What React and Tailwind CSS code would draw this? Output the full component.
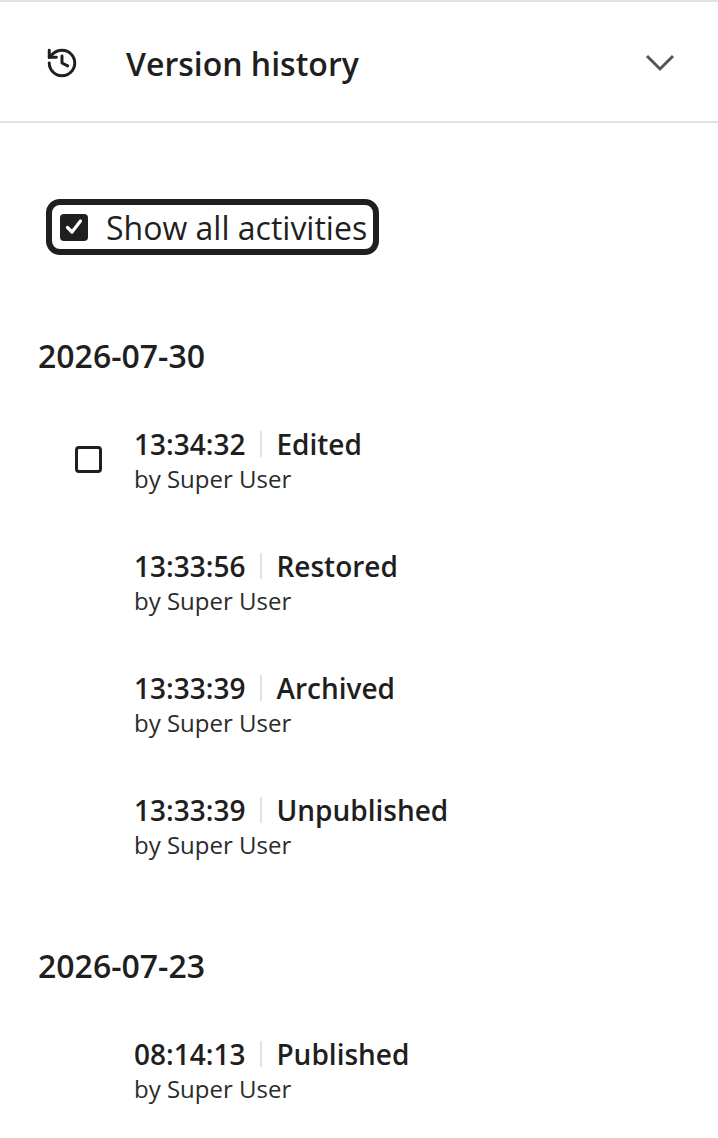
import { History } from "lucide-react";

function Row({ time, action, children }) {
  return (
    <div className="flex h-[122px] items-start">
      <div className="w-[96px] shrink-0 pl-[37px] pt-[18px]">{children}</div>
      <div>
        <div className="flex h-[32px] items-center text-[28px] font-semibold leading-[32px] text-[#1f1f1f]">
          <span>{time}</span>
          <span className="ml-[15px] mr-[14px] h-[26px] w-[2px] bg-[#e0e3e3]" />
          <span>{action}</span>
        </div>
        <div className="mt-[3px] text-[24px] leading-[32px] text-[#2b2b2b]">by Super User</div>
      </div>
    </div>
  );
}

function Group({ date, items, first }) {
  return (
    <section>
      <h3 className="pl-[38px] text-[32px] font-semibold leading-[40px] text-[#1f1f1f]">{date}</h3>
      <div className="mt-[52px] pl-[38px]">
        {items.map((item, i) => (
          <Row key={item.time + item.action} time={item.time} action={item.action}>
            {first && i === 0 ? <div className="h-[27px] w-[27px] rounded-[4px] border-[3px] border-[#1f1f1f]" /> : null}
          </Row>
        ))}
      </div>
    </section>
  );
}

export default function App() {
  return (
    <div className="min-h-[1138px] bg-white font-['Open_Sans',sans-serif]">
      <header className="flex h-[123px] items-center border-y-2 border-[#dfe3e3] pl-[45px] pr-[42px]">
        <History className="mt-[2px] h-[34px] w-[34px] text-[#1f1f1f]" strokeWidth={2.1} />
        <h2 className="ml-[47px] flex-1 pt-[4px] text-[32px] font-semibold text-[#1f1f1f]">Version history</h2>
        <svg width="32" height="20" viewBox="0 0 32 20" fill="none" className="text-[#555555]">
          <path d="M3 4 L16 17 L29 4" stroke="currentColor" strokeWidth="3" />
        </svg>
      </header>
      <div className="pl-[46px] pt-[76px]">
        <label className="inline-flex h-[56px] items-center gap-[18px] rounded-[14px] border-[6px] border-[#1f1f1f] pl-[8px] pr-[6px]">
          <span className="grid h-[27px] w-[28px] place-items-center rounded-[4px] bg-[#1f1f1f]">
            <svg width="20" height="20" viewBox="0 0 20 20" fill="none">
              <path d="M3.5 10.5 L8 15 L16.5 4" stroke="white" strokeWidth="3.2" strokeLinecap="round" strokeLinejoin="round" />
            </svg>
          </span>
          <span className="pt-[2px] text-[32px] leading-none text-[#1f1f1f]">Show all activities</span>
        </label>
      </div>
      <div className="mt-[81px]">
        <Group
          first
          date="2026-07-30"
          items={[
            { time: "13:34:32", action: "Edited" },
            { time: "13:33:56", action: "Restored" },
            { time: "13:33:39", action: "Archived" },
            { time: "13:33:39", action: "Unpublished" },
          ]}
        />
        <div className="mt-[30px]">
          <Group date="2026-07-23" items={[{ time: "08:14:13", action: "Published" }]} />
        </div>
      </div>
    </div>
  );
}
